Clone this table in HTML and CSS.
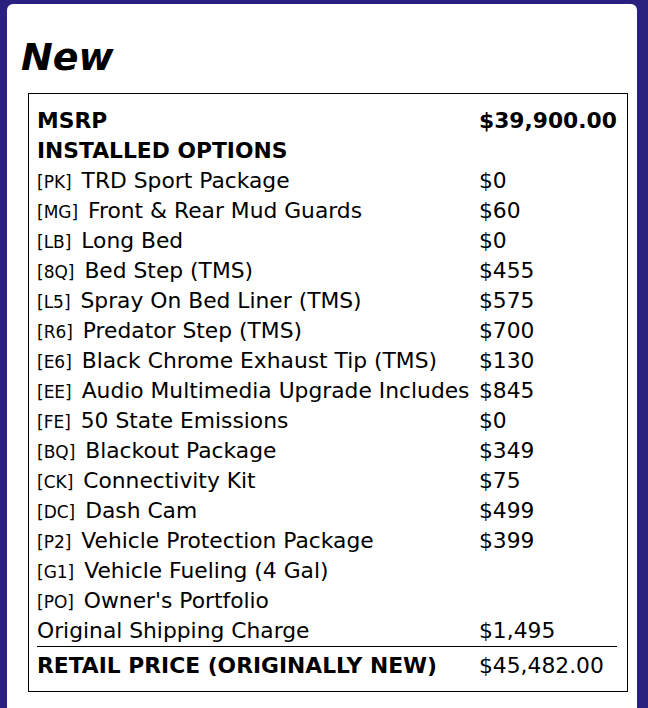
FILE: index.html
```html
<!DOCTYPE html>
<html>
<head>
<meta charset="utf-8">
<link rel="stylesheet" href="styles.css">
</head>
<body>
<div class="card">
  <h1 class="title">New</h1>
  <div class="box">
    <div class="grid">
      <div class="cell bold">MSRP</div><div class="cell bold">$39,900.00</div>
      <div class="cell bold">INSTALLED OPTIONS</div><div class="cell"></div>
      <div class="cell"><span class="code">[PK]</span> TRD Sport Package</div><div class="cell">$0</div>
      <div class="cell"><span class="code">[MG]</span> Front &amp; Rear Mud Guards</div><div class="cell">$60</div>
      <div class="cell"><span class="code">[LB]</span> Long Bed</div><div class="cell">$0</div>
      <div class="cell"><span class="code">[8Q]</span> Bed Step (TMS)</div><div class="cell">$455</div>
      <div class="cell"><span class="code">[L5]</span> Spray On Bed Liner (TMS)</div><div class="cell">$575</div>
      <div class="cell"><span class="code">[R6]</span> Predator Step (TMS)</div><div class="cell">$700</div>
      <div class="cell"><span class="code">[E6]</span> Black Chrome Exhaust Tip (TMS)</div><div class="cell">$130</div>
      <div class="cell"><span class="code">[EE]</span> Audio Multimedia Upgrade Includes</div><div class="cell">$845</div>
      <div class="cell"><span class="code">[FE]</span> 50 State Emissions</div><div class="cell">$0</div>
      <div class="cell"><span class="code">[BQ]</span> Blackout Package</div><div class="cell">$349</div>
      <div class="cell"><span class="code">[CK]</span> Connectivity Kit</div><div class="cell">$75</div>
      <div class="cell"><span class="code">[DC]</span> Dash Cam</div><div class="cell">$499</div>
      <div class="cell"><span class="code">[P2]</span> Vehicle Protection Package</div><div class="cell">$399</div>
      <div class="cell"><span class="code">[G1]</span> Vehicle Fueling (4 Gal)</div><div class="cell"></div>
      <div class="cell"><span class="code">[PO]</span> Owner's Portfolio</div><div class="cell"></div>
      <div class="cell">Original Shipping Charge</div><div class="cell">$1,495</div>
      <div class="cell total bold">RETAIL PRICE (ORIGINALLY NEW)</div><div class="cell total">$45,482.00</div>
    </div>
  </div>
</div>
</body>
</html>
```

FILE: styles.css
```css
html, body {
  margin: 0;
  padding: 0;
  background: #2a2080;
}
body {
  padding: 4px 0 0 7px;
  font-family: "DejaVu Sans", sans-serif;
  color: #000;
}
.card {
  width: 630px;
  min-height: 720px;
  box-sizing: border-box;
  background: #fff;
  border-radius: 6px 6px 0 0;
  padding: 31px 0 0 14px;
}
.title {
  margin: 0;
  font-size: 38px;
  line-height: 44px;
  font-weight: bold;
  font-style: italic;
}
.box {
  margin: 14px 0 0 7px;
  width: 600px;
  box-sizing: border-box;
  border: 1px solid #000;
  padding: 12px 0 10px 8px;
}
.grid {
  width: 578px;
  display: grid;
  grid-template-columns: 442px 1fr;
}
.cell {
  font-size: 21.8px;
  line-height: 30px;
  height: 30px;
  white-space: nowrap;
}
.bold {
  font-weight: bold;
}
.code {
  font-size: 17px;
  margin-right: 3px;
}
.total {
  border-top: 1px solid #000;
  padding-top: 4px;
  height: 30px;
}
```
